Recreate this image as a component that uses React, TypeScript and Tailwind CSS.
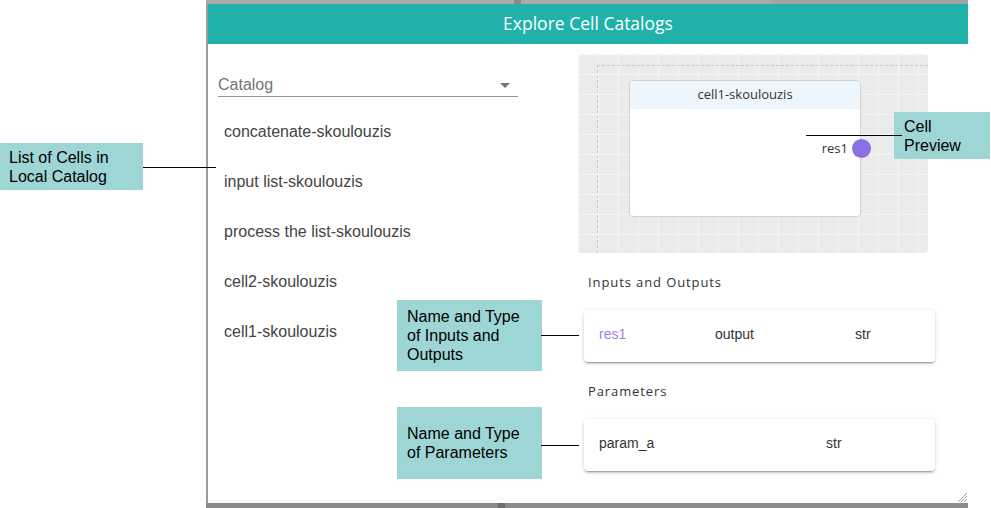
const cells = [
  "concatenate-skoulouzis",
  "input list-skoulouzis",
  "process the list-skoulouzis",
  "cell2-skoulouzis",
  "cell1-skoulouzis",
];

const Callout = ({ className, children }: { className: string; children: React.ReactNode }) => (
  <div
    className={`absolute flex items-center bg-[#9ed6d6] text-[16px] leading-[19px] text-black ${className}`}
  >
    <div>{children}</div>
  </div>
);

const App = () => {
  return (
    <div className="relative h-[508px] w-[991px] overflow-hidden bg-white font-['Liberation_Sans',Arial,sans-serif]">
      <div className="ml-[206px] flex h-full w-[762px] flex-col">
        {/* backdrop strip above the dialog */}
        <div className="flex h-[4px]">
          <div className="w-[308px] bg-[#a9a9a9]" />
          <div className="w-[7px] bg-[#8a8a8a]" />
          <div className="w-[251px] bg-[#a9a9a9]" />
          <div className="flex-1 bg-[#a3a3a3]" />
        </div>

        <div className="flex flex-1">
          <div className="w-[2px] bg-[#9b9b9b]" />
          <div className="relative flex flex-1 flex-col bg-white">
            <div className="flex h-[40px] items-center justify-center pb-[2px] font-['Open_Sans',sans-serif] text-[17.5px] text-white bg-[#20b2aa]">
              Explore Cell Catalogs
            </div>

            <div className="flex flex-1">
              {/* catalog + cell list */}
              <div className="w-[370px] pl-[10px]">
                <div className="mt-[26px] flex h-[27px] w-[300px] items-center justify-between border-b border-[#949494] pt-[4px]">
                  <span className="text-[16px] text-[#757575]">Catalog</span>
                  <svg viewBox="0 0 24 24" className="mr-[1px] h-[24px] w-[24px] fill-[#757575]">
                    <path d="M7 10l5 5 5-5z" />
                  </svg>
                </div>
                <div className="mt-[10px] flex flex-col">
                  {cells.map((c) => (
                    <div key={c} className="flex h-[50px] items-center pl-[6px] text-[16px] text-[#444]">
                      {c}
                    </div>
                  ))}
                </div>
              </div>

              {/* preview + details */}
              <div className="w-[358px]">
                <div className="mt-[10px] flex h-[199px] w-[350px] flex-col rounded-[4px] bg-[#ebebeb] bg-[linear-gradient(to_right,rgba(255,255,255,0.45)_1px,transparent_1px),linear-gradient(to_bottom,rgba(255,255,255,0.45)_1px,transparent_1px)] bg-[length:20px_20px] pl-[19px] pt-[11px]">
                  <div className="flex-1 border-l border-t border-dashed border-[#c9c9c9] pl-[31px] pt-[14px]">
                    <div className="flex h-[137px] w-[232px] flex-col rounded-[4px] border border-[#d2d2d2] bg-white font-['Open_Sans',sans-serif] text-[13px] text-[#333]">
                      <div className="flex h-[28px] items-center justify-center rounded-t-[4px] bg-[#eef6fd]">
                        cell1-skoulouzis
                      </div>
                      <div className="mr-[-11px] mt-[30px] flex items-center justify-end gap-[4px]">
                        <span>res1</span>
                        <div className="h-[19px] w-[19px] rounded-full bg-[#8a70e2]" />
                      </div>
                    </div>
                  </div>
                </div>

                <div className="mt-[20px] h-[18px] pl-[10px] font-['Open_Sans',sans-serif] text-[13px] leading-[18px] tracking-[0.9px] text-[#333]">
                  Inputs and Outputs
                </div>
                <div className="ml-[6px] mt-[19px] grid h-[52px] w-[351px] grid-cols-[116px_140px_1fr] items-center rounded-[4px] bg-white pb-[3px] pl-[15px] text-[14px] text-[#333] shadow-[0_3px_1px_-2px_rgba(0,0,0,0.2),0_2px_2px_0_rgba(0,0,0,0.14),0_1px_5px_0_rgba(0,0,0,0.12)]">
                  <span className="text-[#a57fe3]">res1</span>
                  <span>output</span>
                  <span>str</span>
                </div>

                <div className="mt-[20px] h-[18px] pl-[10px] font-['Open_Sans',sans-serif] text-[13px] leading-[18px] tracking-[0.9px] text-[#333]">
                  Parameters
                </div>
                <div className="ml-[6px] mt-[19px] grid h-[52px] w-[351px] grid-cols-[227px_1fr] items-center rounded-[4px] bg-white pb-[3px] pl-[15px] text-[14px] text-[#333] shadow-[0_3px_1px_-2px_rgba(0,0,0,0.2),0_2px_2px_0_rgba(0,0,0,0.14),0_1px_5px_0_rgba(0,0,0,0.12)]">
                  <span>param_a</span>
                  <span>str</span>
                </div>
              </div>
            </div>

            {/* resize grip */}
            <svg className="absolute bottom-[1px] right-[1px] h-[10px] w-[10px]" viewBox="0 0 10 10">
              <path d="M10 1L1 10M10 4L4 10M10 7L7 10" stroke="#999" strokeWidth="1" />
            </svg>
          </div>
        </div>

        {/* backdrop strip below the dialog */}
        <div className="flex h-[5px]">
          <div className="w-[292px] bg-[#8a8a8a]" />
          <div className="w-[7px] bg-[#6f6f6f]" />
          <div className="flex-1 bg-[#8c8c8c]" />
        </div>
      </div>

      {/* annotations */}
      <Callout className="left-0 top-[143px] h-[47px] w-[143px] pl-[9px]">
        List of Cells in
        <br />
        Local Catalog
      </Callout>
      <div className="absolute left-[143px] top-[167px] h-px w-[73px] bg-black" />

      <Callout className="left-[894px] top-[112px] h-[47px] w-[96px] pl-[10px]">
        Cell
        <br />
        Preview
      </Callout>
      <div className="absolute left-[806px] top-[135px] h-px w-[96px] bg-black" />

      <Callout className="left-[397px] top-[300px] h-[71px] w-[145px] pl-[10px]">
        Name and Type
        <br />
        of Inputs and
        <br />
        Outputs
      </Callout>
      <div className="absolute left-[541px] top-[335px] h-px w-[38px] bg-black" />

      <Callout className="left-[397px] top-[407px] h-[72px] w-[145px] pl-[10px]">
        Name and Type
        <br />
        of Parameters
      </Callout>
      <div className="absolute left-[541px] top-[445px] h-px w-[38px] bg-black" />
    </div>
  );
};

export default App;
